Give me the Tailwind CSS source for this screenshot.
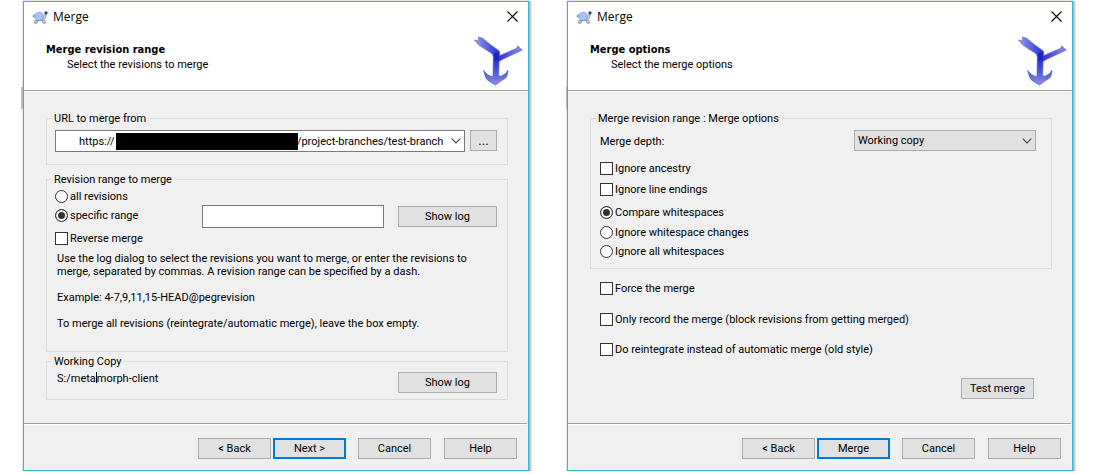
<!DOCTYPE html>
<html lang="en">
<head>
<meta charset="utf-8">
<title>Merge</title>
<script src="https://cdn.jsdelivr.net/npm/@tailwindcss/browser@4"></script>
</head>
<body class="bg-white font-['Roboto','Liberation_Sans',sans-serif] text-[11px] leading-[13px] text-black">
<svg class="absolute size-0" aria-hidden="true">
  <defs>
    <linearGradient id="arm" x1="0" y1="0" x2="1" y2="0">
      <stop offset="0" stop-color="#9aa0ee"/><stop offset=".5" stop-color="#2a30cf"/><stop offset="1" stop-color="#8c92ea"/>
    </linearGradient>
    <linearGradient id="stem" x1="0" y1="0" x2="0" y2="1">
      <stop offset="0" stop-color="#1c22cc"/><stop offset=".5" stop-color="#4247d4"/><stop offset="1" stop-color="#8a90ea"/>
    </linearGradient>
  </defs>
  <symbol id="turtle" viewBox="0 0 16 13">
    <path d="M3 6 .800 5.500l.7-1.500 2 .5M4 9l-2 2 1 1.500 2-.5 1-2M10 9l1 3 2 .5 1-1-2-3" fill="#c9cbd0" stroke="#80858f" stroke-width=".8"/>
    <path d="M10 6c1.500 0 2-1 2-2.500L14.500 4 13 8l-3 1z" fill="#c4c8d0" stroke="#8d929c" stroke-width=".6"/>
    <ellipse cx="7" cy="5.500" rx="4.200" ry="4" fill="#a9c4fb" stroke="#7f9bd0" stroke-width=".8"/>
    <path d="M3.500 9.500h7" stroke="#8c9099" stroke-width="1"/>
    <circle cx="14" cy="1.900" r="1.600" fill="#1f4a6d"/>
  </symbol>
  <symbol id="anchor" viewBox="12 12 147 150">
    <path d="M13 24 25 26 25 15 37 18 62 38 88 57 88 71 140 49 143 42 157 54 145 60 100 81 86 89 71 74 66 65 27 40z" fill="url(#arm)" stroke="#6a6fc0" stroke-width="2" stroke-linejoin="round"/>
    <path d="M70 66 88 58 86 133Q104 132 114 115 114 128 108 137 96 144 88 151L76 159 64 152Q48 143 46 134L41 115Q52 132 69 134z" fill="url(#stem)" stroke="#5a5fbc" stroke-width="2" stroke-linejoin="round"/>
    <path d="M72 64 86 60 88 84 72 88z" fill="#1c22cc"/>
  </symbol>
  <symbol id="close" viewBox="0 0 11 11"><path d="M.5.500l10 10M10.500.500l-10 10" stroke="#000" stroke-width="1.100" fill="none"/></symbol>
  <symbol id="chevron" viewBox="0 0 10 6"><path d="M.7.700 5 5 9.300.700" stroke="#444" stroke-width="1.100" fill="none"/></symbol>
</svg>

<main class="flex items-start gap-[38px] pt-px pr-[27px] pl-[23px]">

  <!-- Revision range page -->
  <section class="relative min-w-0 flex-1 border border-[#2cb8cf] bg-[#f0f0f0] shadow-[1px_1px_2px_1px_rgba(0,0,0,0.3)]">
    <span class="absolute top-[85px] -left-[3px] h-[22px] w-[2px] bg-[#bdbdbd]"></span>
    <header class="h-[89px] border-b border-[#a0a0a0] bg-white pl-2">
      <div class="flex h-[30px] items-center pr-[10px]">
        <svg class="h-[13px] w-4"><use href="#turtle"/></svg>
        <h1 class="ml-[5px] flex-1 font-['Open_Sans','Noto_Sans',sans-serif] text-[12px] leading-4">Merge</h1>
        <button type="button" aria-label="Close" class="-mt-px"><svg class="size-[11px]"><use href="#close"/></svg></button>
      </div>
      <div class="flex items-start justify-between pr-[5px]">
        <div class="pt-[10px] pl-[14px]">
          <h2 class="font-['DejaVu_Sans_Condensed','DejaVu_Sans',sans-serif] font-bold leading-[15px]">Merge revision range</h2>
          <p class="pl-[21px] leading-[15px]">Select the revisions to merge</p>
        </div>
        <svg class="mt-1 h-[50px] w-[49px]"><use href="#anchor"/></svg>
      </div>
    </header>
    <div class="border-t border-white pt-5 pr-5 pl-[22px]">
      <fieldset class="border border-[#dcdcdc] pr-[10px] pb-3 pl-2">
        <legend class="-ml-[3px] px-[2px]"><label for="url">URL to merge from</label></legend>
        <div class="flex gap-[5px] pt-[5px]">
          <div class="relative flex-1">
            <select id="url" class="block h-[22px] w-full appearance-none border border-[#7a7a7a] bg-white pl-[23px]">
              <option>https://&emsp;&emsp;&emsp;&emsp;&emsp;&emsp;&emsp;&emsp;&emsp;&emsp;&emsp;&emsp;&emsp;&emsp;&emsp;&emsp;&nbsp;/project-branches/test-branch</option>
            </select>
            <span class="absolute top-[3px] left-[61px] h-[17px] w-[182px] bg-black"></span>
            <svg class="pointer-events-none absolute top-2 right-[4px] h-[6px] w-[10px]"><use href="#chevron"/></svg>
          </div>
          <button type="button" class="h-[21px] w-[27px] border border-[#adadad] bg-[#e1e1e1] text-[13px]" aria-label="Browse">...</button>
        </div>
      </fieldset>

      <fieldset class="mt-2 border border-[#dcdcdc] pr-[10px] pb-[21px] pl-2">
        <legend class="-ml-[3px] px-[2px]">Revision range to merge</legend>
        <label class="flex items-center gap-[2px] pt-1"><input type="radio" name="range" class="size-[13px] appearance-none rounded-full border border-[#333] bg-white checked:bg-[#333] checked:shadow-[inset_0_0_0_2px_white]">all revisions</label>
        <div class="mt-[2px] flex items-start gap-[14px]">
          <label class="flex flex-1 items-center gap-[2px] pt-1"><input type="radio" name="range" checked class="size-[13px] appearance-none rounded-full border border-[#333] bg-white checked:bg-[#333] checked:shadow-[inset_0_0_0_2px_white]">specific range</label>
          <input type="text" aria-label="Revision range" class="h-[23px] w-[182px] border border-[#7a7a7a] bg-white px-1">
          <button type="button" class="mt-px h-[21px] w-[99px] border border-[#adadad] bg-[#e1e1e1]">Show log</button>
        </div>
        <label class="mt-1 flex items-center gap-[2px]"><input type="checkbox" class="size-[13px] appearance-none border border-[#333] bg-white checked:bg-[#333] checked:shadow-[inset_0_0_0_2px_white]">Reverse merge</label>
        <div class="mt-[7px] flex flex-col gap-[13px] pl-[2px]">
          <p>Use the log dialog to select the revisions you want to merge, or enter the revisions to<br>merge, separated by commas. A revision range can be specified by a dash.</p>
          <p>Example: 4-7,9,11,15-HEAD@pegrevision</p>
          <p>To merge all revisions (reintegrate/automatic merge), leave the box empty.</p>
        </div>
      </fieldset>

      <fieldset class="mt-[3px] border border-[#dcdcdc] pr-[10px] pb-[6px] pl-2">
        <legend class="-ml-[3px] px-[2px]">Working Copy</legend>
        <div class="flex items-start justify-between pt-1">
          <p class="pl-[2px]">S:/meta<span class="inline-block h-[11px] w-px bg-black align-[-1px]"></span>morph-client</p>
          <button type="button" class="h-[21px] w-[99px] border border-[#adadad] bg-[#e1e1e1]">Show log</button>
        </div>
      </fieldset>
    </div>
    <footer class="mt-[23px] mr-px border-t border-[#a0a0a0]">
      <div class="flex justify-end border-t border-white pt-[13px] pr-[10px] pb-[11px]">
        <button type="button" class="h-[21px] w-[73px] border border-[#adadad] bg-[#e1e1e1]">&lt; Back</button>
        <button type="button" class="ml-[2px] h-[21px] w-[73px] border-2 border-[#0078d7] bg-[#e1e1e1]">Next &gt;</button>
        <button type="button" class="ml-3 h-[21px] w-[73px] border border-[#adadad] bg-[#e1e1e1]">Cancel</button>
        <button type="button" class="ml-[13px] h-[21px] w-[73px] border border-[#adadad] bg-[#e1e1e1]">Help</button>
      </div>
    </footer>
  </section>

  <!-- Merge options page -->
  <section class="relative min-w-0 flex-1 border border-[#2cb8cf] bg-[#f0f0f0] shadow-[1px_1px_2px_1px_rgba(0,0,0,0.3)]">
    <span class="absolute top-[85px] -left-[2px] h-[22px] w-px bg-[#bdbdbd]"></span>
    <header class="h-[89px] border-b border-[#a0a0a0] bg-white pl-2">
      <div class="flex h-[30px] items-center pr-[10px]">
        <svg class="h-[13px] w-4"><use href="#turtle"/></svg>
        <h1 class="ml-[5px] flex-1 font-['Open_Sans','Noto_Sans',sans-serif] text-[12px] leading-4">Merge</h1>
        <button type="button" aria-label="Close" class="-mt-px"><svg class="size-[11px]"><use href="#close"/></svg></button>
      </div>
      <div class="flex items-start justify-between pr-[5px]">
        <div class="pt-[10px] pl-[14px]">
          <h2 class="font-['DejaVu_Sans_Condensed','DejaVu_Sans',sans-serif] font-bold leading-[15px]">Merge options</h2>
          <p class="pl-[21px] leading-[15px]">Select the merge options</p>
        </div>
        <svg class="mt-1 h-[50px] w-[49px]"><use href="#anchor"/></svg>
      </div>
    </header>
    <div class="flex flex-col border-t border-white pt-5 pr-5 pl-[22px]">
      <fieldset class="border border-[#dcdcdc] pr-[15px] pb-[10px] pl-[9px]">
        <legend class="-ml-[4px] px-[2px]">Merge revision range : Merge options</legend>
        <div class="flex items-center justify-between pt-[5px]">
          <label for="depth" class="pt-[2px]">Merge depth:</label>
          <div class="relative w-[182px]">
            <select id="depth" class="block h-[21px] w-full appearance-none border border-[#adadad] bg-[#e1e1e1] pl-[3px]"><option>Working copy</option></select>
            <svg class="pointer-events-none absolute top-2 right-[4px] h-[6px] w-[10px]"><use href="#chevron"/></svg>
          </div>
        </div>
        <label class="mt-[11px] flex items-center gap-[2px]"><input type="checkbox" class="size-[13px] appearance-none border border-[#333] bg-white checked:bg-[#333] checked:shadow-[inset_0_0_0_2px_white]">Ignore ancestry</label>
        <label class="mt-2 flex items-center gap-[2px]"><input type="checkbox" class="size-[13px] appearance-none border border-[#333] bg-white checked:bg-[#333] checked:shadow-[inset_0_0_0_2px_white]">Ignore line endings</label>
        <label class="mt-[10px] flex items-center gap-[2px]"><input type="radio" name="ws" checked class="size-[13px] appearance-none rounded-full border border-[#333] bg-white checked:bg-[#333] checked:shadow-[inset_0_0_0_2px_white]">Compare whitespaces</label>
        <label class="mt-[7px] flex items-center gap-[2px]"><input type="radio" name="ws" class="size-[13px] appearance-none rounded-full border border-[#333] bg-white checked:bg-[#333] checked:shadow-[inset_0_0_0_2px_white]">Ignore whitespace changes</label>
        <label class="mt-[6px] flex items-center gap-[2px]"><input type="radio" name="ws" class="size-[13px] appearance-none rounded-full border border-[#333] bg-white checked:bg-[#333] checked:shadow-[inset_0_0_0_2px_white]">Ignore all whitespaces</label>
      </fieldset>
      <div class="flex flex-col gap-[17px] pt-[13px] pl-[10px]">
        <label class="flex items-center gap-[2px]"><input type="checkbox" class="size-[13px] appearance-none border border-[#333] bg-white checked:bg-[#333] checked:shadow-[inset_0_0_0_2px_white]">Force the merge</label>
        <label class="flex items-center gap-[2px] pt-px"><input type="checkbox" class="size-[13px] appearance-none border border-[#333] bg-white checked:bg-[#333] checked:shadow-[inset_0_0_0_2px_white]">Only record the merge (block revisions from getting merged)</label>
        <label class="flex items-center gap-[2px]"><input type="checkbox" class="size-[13px] appearance-none border border-[#333] bg-white checked:bg-[#333] checked:shadow-[inset_0_0_0_2px_white]">Do reintegrate instead of automatic merge (old style)</label>
      </div>
      <button type="button" class="mt-[22px] mr-[18px] h-[21px] w-[73px] self-end border border-[#adadad] bg-[#e1e1e1]">Test merge</button>
    </div>
    <footer class="mt-6 mr-px border-t border-[#a0a0a0]">
      <div class="flex justify-end border-t border-white pt-[13px] pr-[10px] pb-[11px]">
        <button type="button" class="h-[21px] w-[73px] border border-[#adadad] bg-[#e1e1e1]">&lt; Back</button>
        <button type="button" class="ml-[2px] h-[21px] w-[73px] border-2 border-[#0078d7] bg-[#e1e1e1]">Merge</button>
        <button type="button" class="ml-3 h-[21px] w-[73px] border border-[#adadad] bg-[#e1e1e1]">Cancel</button>
        <button type="button" class="ml-[13px] h-[21px] w-[73px] border border-[#adadad] bg-[#e1e1e1]">Help</button>
      </div>
    </footer>
  </section>
</main>
</body>
</html>
